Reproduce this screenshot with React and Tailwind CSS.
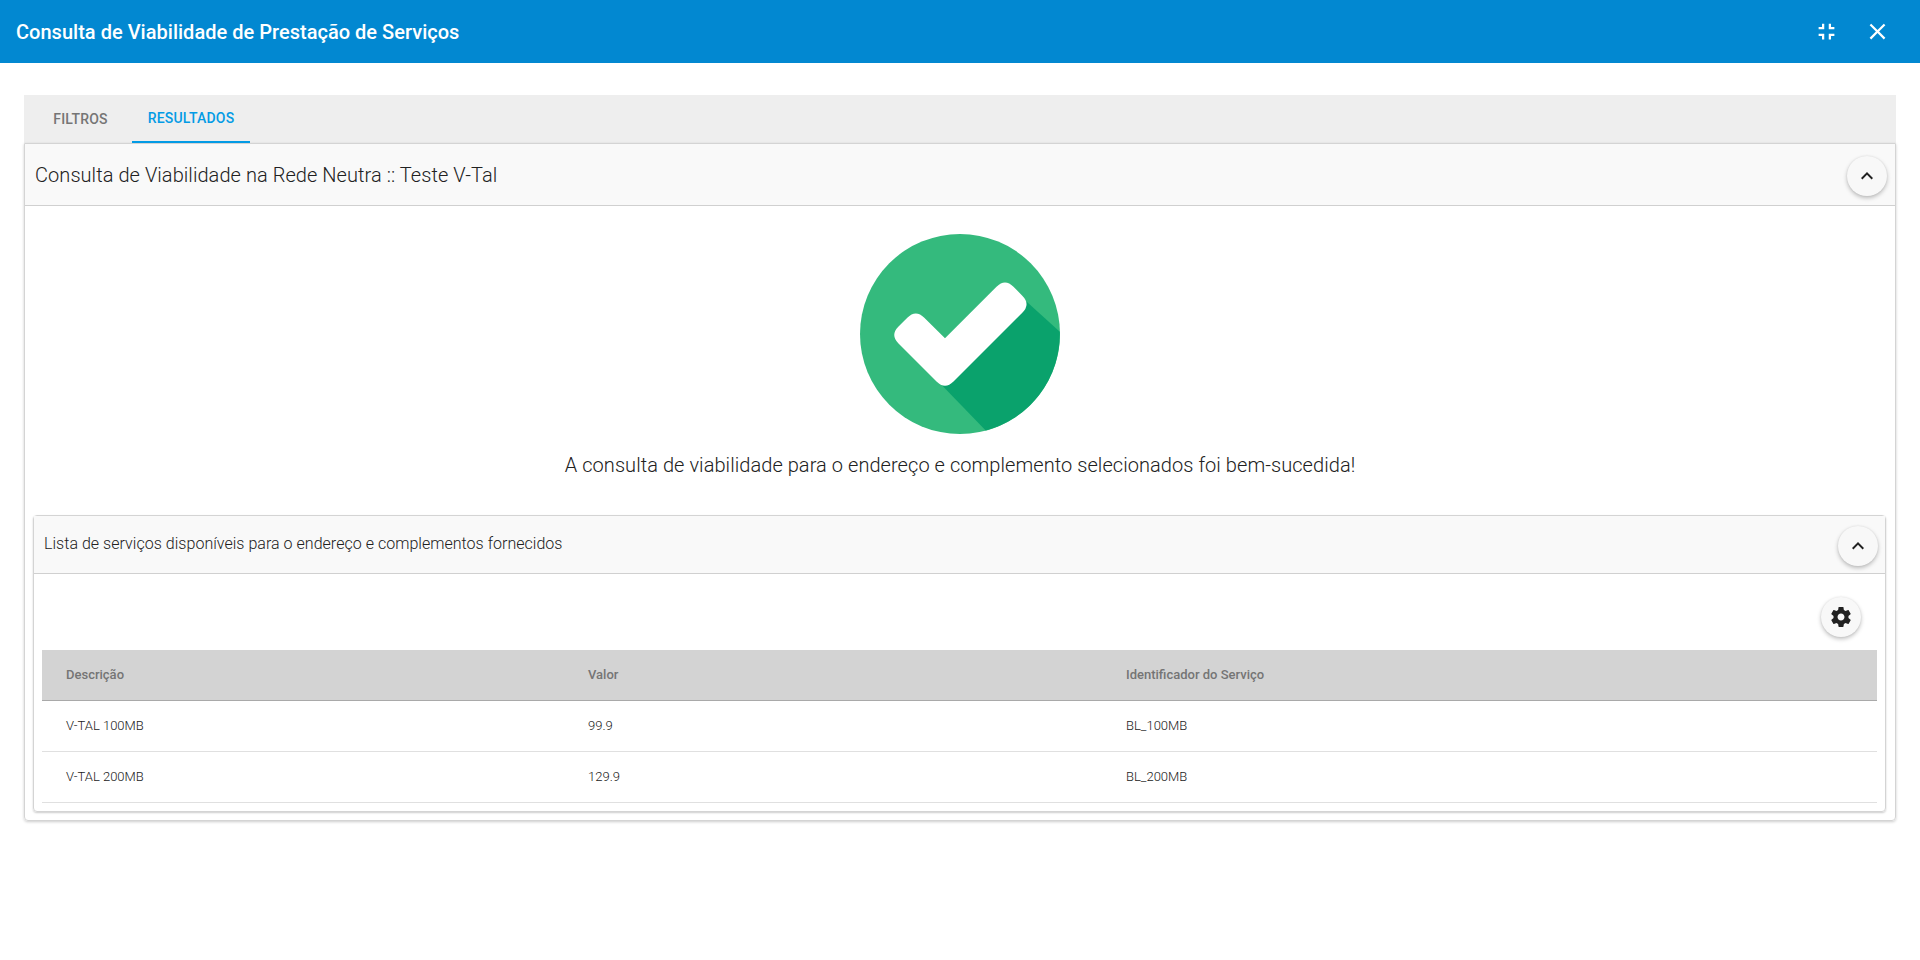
const FullExit = () => (
  <svg viewBox="0 0 24 24" className="w-[27px] h-[27px] fill-white"><path d="M5 16h3v3h2v-5H5v2zm3-8H5v2h5V5H8v3zm6 11h2v-3h3v-2h-5v5zm2-11V5h-2v5h5V8h-3z" /></svg>
);
const Close = () => (
  <svg viewBox="0 0 24 24" className="w-[27px] h-[27px] fill-white"><path d="M19 6.41L17.59 5 12 10.59 6.41 5 5 6.41 10.59 12 5 17.59 6.41 19 12 13.41 17.59 19 19 17.59 13.41 12z" /></svg>
);
const RoundBtn = ({ children }) => (
  <div className="w-10 h-10 rounded-full bg-[#f8f8f8] flex items-center justify-center shadow-[0_2px_4px_rgba(0,0,0,0.25),0_0_2px_rgba(0,0,0,0.08)] shrink-0">
    {children}
  </div>
);
const Chevron = () => (
  <svg viewBox="0 0 24 24" className="w-6 h-6 fill-[#212121]"><path d="M12 8l-6 6 1.41 1.41L12 10.83l4.59 4.58L18 14z" /></svg>
);
const Gear = () => (
  <svg viewBox="0 0 24 24" className="w-6 h-6 fill-[#212121]"><path d="M19.43 12.98c.04-.32.07-.64.07-.98s-.03-.66-.07-.98l2.11-1.65c.19-.15.24-.42.12-.64l-2-3.46c-.12-.22-.39-.3-.61-.22l-2.49 1c-.52-.4-1.08-.73-1.69-.98l-.38-2.65C14.46 2.18 14.25 2 14 2h-4c-.25 0-.46.18-.49.42l-.38 2.65c-.61.25-1.17.59-1.69.98l-2.49-1c-.23-.09-.49 0-.61.22l-2 3.46c-.13.22-.07.49.12.64l2.11 1.65c-.04.32-.07.65-.07.98s.03.66.07.98l-2.11 1.65c-.19.15-.24.42-.12.64l2 3.46c.12.22.39.3.61.22l2.49-1c.52.4 1.08.73 1.69.98l.38 2.65c.03.24.24.42.49.42h4c.25 0 .46-.18.49-.42l.38-2.65c.61-.25 1.17-.59 1.69-.98l2.49 1c.23.09.49 0 .61-.22l2-3.46c.12-.22.07-.49-.12-.64l-2.11-1.65zM12 15.5c-1.93 0-3.5-1.57-3.5-3.5s1.57-3.5 3.5-3.5 3.5 1.57 3.5 3.5-1.57 3.5-3.5 3.5z" /></svg>
);
const Check = () => (
  <svg viewBox="0 0 200 200" className="w-[200px] h-[200px]">
    <circle cx="100" cy="100" r="100" fill="#34ba7d" />
    <path d="M166.7 67.7L199.8 97.7A100 100 0 0 1 125.7 196.6L81.7 151Z" fill="#0aa26c" />
    <path fill="#fff" d="M38.5 92.5L47.3 83.7Q55.8 75.2 64.3 83.7L85 104.3L136.5 52.8Q145 44.3 153.5 52.8L162.3 61.7Q170.8 70.2 162.3 78.7L93.5 147.5Q85 156 76.5 147.5L38.5 109.5Q30 101 38.5 92.5Z" />
  </svg>
);
const rows = [
  ["V-TAL 100MB", "99.9", "BL_100MB"],
  ["V-TAL 200MB", "129.9", "BL_200MB"],
];
const cols = "grid grid-cols-[522px_538px_1fr] pl-6";

export default function App() {
  return (
    <div className="min-h-[960px] bg-white font-['Roboto',sans-serif]">
      <header className="h-[63px] bg-[#0288d1] flex items-center justify-between pl-4 pr-[29px] text-white">
        <h1 className="text-[20px] font-medium leading-none tracking-[0.02px]">Consulta de Viabilidade de Prestação de Serviços</h1>
        <div className="flex items-center gap-6 mb-[1px]">
          <FullExit />
          <Close />
        </div>
      </header>
      <main className="pt-8 pl-6 pr-6">
        <nav className="h-[48px] bg-[#eeeeee] flex pl-[13px] text-[14px] font-medium uppercase tracking-[0.2px]">
          <div className="w-[87px] mr-2 flex items-center justify-center text-[#757575]">Filtros</div>
          <div className="w-[118px] flex items-center justify-center text-[#039be5] border-b-2 border-[#039be5]">Resultados</div>
        </nav>
        <section className="h-[678px] border border-[#d4d4d4] rounded-b shadow-[0_1px_3px_rgba(0,0,0,0.2)]">
          <div className="h-[62px] bg-[#f9f9f9] border-b border-[#d0d0d0] flex items-center justify-between pl-[10px] pr-[8px]">
            <h2 className="text-[20px] text-[#212121] font-light tracking-[0.06px]">Consulta de Viabilidade na Rede Neutra :: Teste V-Tal</h2>
            <div className="mt-[3px]"><RoundBtn><Chevron /></RoundBtn></div>
          </div>
          <div className="flex flex-col items-center pt-[28px]">
            <Check />
            <p className="mt-[16px] text-[20px] leading-[30px] text-[#212121] font-light tracking-[0.06px]">A consulta de viabilidade para o endereço e complemento selecionados foi bem-sucedida!</p>
          </div>
          <div className="mt-[35px] ml-2 mr-[9px] h-[297px] border border-[#d4d4d4] rounded shadow-[0_1px_2px_rgba(0,0,0,0.2)]">
            <div className="h-[58px] bg-[#f9f9f9] border-b border-[#d0d0d0] flex items-center justify-between pl-[10px] pr-[7px]">
              <h3 className="text-[16px] text-[#212121] font-light tracking-[0.03px] mb-[2px]">Lista de serviços disponíveis para o endereço e complementos fornecidos</h3>
              <div className="mt-[2px]"><RoundBtn><Chevron /></RoundBtn></div>
            </div>
            <div className="pl-2 pr-2">
              <div className="h-[76px] flex items-start justify-end pt-[23px] pr-4">
                <RoundBtn><Gear /></RoundBtn>
              </div>
              <div className={`${cols} h-[51px] items-center bg-[#d3d3d3] border-b border-[#a9a9a9] text-[13px] font-medium text-[#757575]`}>
                <div>Descrição</div>
                <div>Valor</div>
                <div>Identificador do Serviço</div>
              </div>
              {rows.map((r) => (
                <div key={r[0]} className={`${cols} h-[51px] items-center border-b border-[#e0e0e0] text-[13px] font-light text-[#212121]`}>
                  <div>{r[0]}</div>
                  <div>{r[1]}</div>
                  <div>{r[2]}</div>
                </div>
              ))}
            </div>
          </div>
        </section>
      </main>
    </div>
  );
}
